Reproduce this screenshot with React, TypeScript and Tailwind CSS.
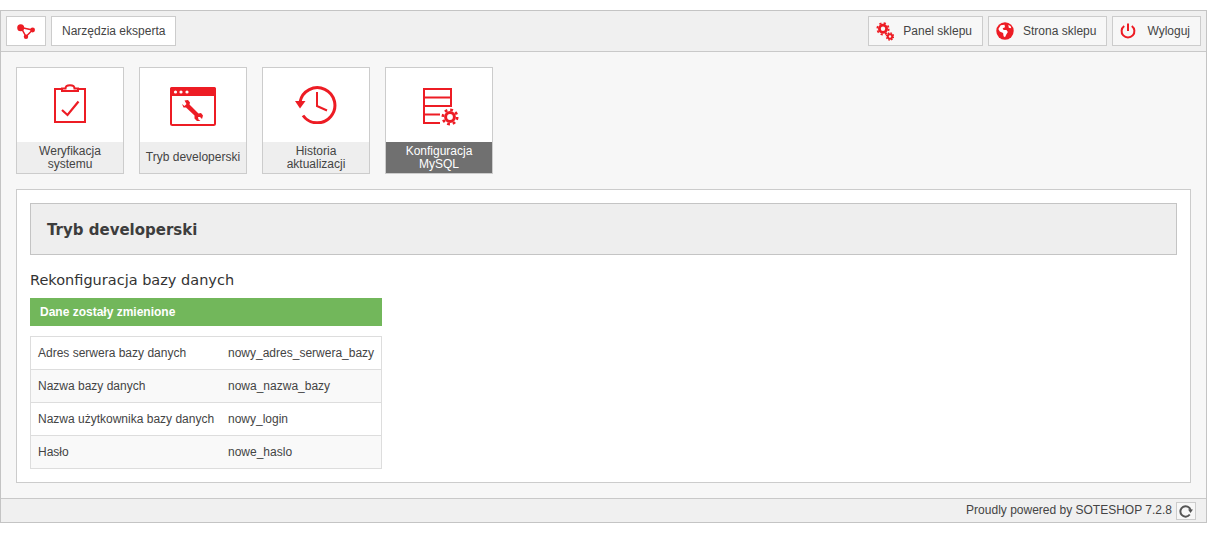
const font = { fontFamily: '"Liberation Sans", Arial, sans-serif' };

function GearsIcon() {
  return (
    <svg width="18" height="19" viewBox="0 0 18 19" fill="none" stroke="#ed1c24">
      <circle cx="7" cy="6.8" r="3.6" strokeWidth="2.8" />
      <circle cx="7" cy="6.8" r="5.7" strokeWidth="1.8" strokeDasharray="2.2 2.28" />
      <circle cx="14" cy="14.5" r="2.2" strokeWidth="1.9" />
      <circle cx="14" cy="14.5" r="3.6" strokeWidth="1.4" strokeDasharray="1.6 1.23" />
    </svg>
  );
}

function GlobeIcon() {
  return (
    <svg width="18" height="18" viewBox="0 0 19 19">
      <circle cx="9.5" cy="9.5" r="9.2" fill="#ed1c24" />
      <path d="M5 3.5 L9 3 L9.5 5.5 L7 6.5 L8 8.5 L11 8.5 L12.5 10.5 L11 13 L9.5 16 L8 15 L7.5 11.5 L4 10 L2.5 7.5 Z" fill="#fff" />
      <path d="M13 2.8 L15.5 4.5 L16 6.5 L13.5 6 Z" fill="#fff" />
    </svg>
  );
}

function PowerIcon() {
  return (
    <svg width="16" height="16" viewBox="0 0 16 16" fill="none" stroke="#ed1c24" strokeWidth="2">
      <path d="M8 0.5 V8" />
      <path d="M4.2 3 A6.4 6.4 0 1 0 11.8 3" />
    </svg>
  );
}

function NetworkIcon() {
  return (
    <svg width="18" height="15" viewBox="0 0 18 15" fill="none" stroke="#ed1c24">
      <path d="M4 3.5 L15.5 6 L9 12.5 Z" strokeWidth="1.5" />
      <circle cx="3.7" cy="3.7" r="3.5" fill="#ed1c24" stroke="none" />
      <circle cx="15.6" cy="6" r="2.4" fill="#ed1c24" stroke="none" />
      <circle cx="9" cy="12.7" r="2.2" fill="#ed1c24" stroke="none" />
    </svg>
  );
}

function RefreshIcon() {
  return (
    <svg width="14" height="14" viewBox="0 0 14 14" fill="none" stroke="#555555" strokeWidth="2">
      <path d="M11.6 6 A5.2 5.2 0 1 0 10.8 10.5" />
      <path d="M9 5.5 H14 L11.5 9 Z" fill="#555555" stroke="none" />
    </svg>
  );
}

function ClipboardIcon() {
  return (
    <svg width="32" height="39" viewBox="0 0 32 39" fill="none" stroke="#ed1c24" strokeWidth="2" className="mb-[3px]">
      <path d="M8 5 H1 V38 H31 V5 H24" />
      <path d="M8 7 V4.5 H11.5 C11.5 0 20.5 0 20.5 4.5 H24 V7 Z" fill="#fff" />
      <path d="M8 26 L13.5 31 L24.5 17.5" strokeWidth="2.2" />
    </svg>
  );
}

function WindowIcon() {
  return (
    <svg width="46" height="39" viewBox="0 0 46 39" fill="none" className="mt-[2px]">
      <rect x="1" y="1" width="44" height="37" rx="1.5" stroke="#ed1c24" strokeWidth="2" />
      <path d="M0 2 Q0 0 2 0 H44 Q46 0 46 2 V9 H0 Z" fill="#ed1c24" />
      <circle cx="5.5" cy="5" r="1.6" fill="#fff" />
      <circle cx="11" cy="5" r="1.6" fill="#fff" />
      <circle cx="17" cy="5" r="1.6" fill="#fff" />
      <path d="M14.5 13.5 L18 13 L20 15.5 L19.5 17.5 L28.5 26.5 L31 26 L33 28.5 L32 32 L30 30 L28 30 L28.5 32.5 L30.5 34 L27 34 L24.5 31.5 L24.5 28.5 L16 20.5 L13.5 20.5 L12 17 L14.5 19 L16.5 17 Z" fill="#ed1c24" />
    </svg>
  );
}

function HistoryIcon() {
  return (
    <svg width="43" height="38" viewBox="0 0 43 38" fill="none" stroke="#ed1c24">
      <path d="M5 16 A17.6 17.6 0 1 1 8 29.5" strokeWidth="3" />
      <path d="M0 15 H10.5 L5 22.5 Z" fill="#ed1c24" stroke="none" />
      <path d="M22 6 V20 L32 24.5" strokeWidth="2" />
    </svg>
  );
}

function DatabaseIcon() {
  return (
    <svg width="36" height="38" viewBox="0 0 36 38" fill="none" stroke="#ed1c24" strokeWidth="2" className="mt-[4px] ml-[4px]">
      <path d="M17 35 H1 V1 H28 V18 H1 M1 9.5 H28 M1 26.5 H17" />
      <circle cx="27" cy="29" r="4.4" strokeWidth="3" />
      <circle cx="27" cy="29" r="7.2" strokeWidth="2.6" strokeDasharray="2.8 2.85" />
    </svg>
  );
}

const tiles = [
  { label: 'Weryfikacja systemu', icon: <ClipboardIcon /> },
  { label: 'Tryb developerski', icon: <WindowIcon /> },
  { label: 'Historia aktualizacji', icon: <HistoryIcon /> },
  { label: 'Konfiguracja MySQL', icon: <DatabaseIcon />, active: true },
];

const rows = [
  ['Adres serwera bazy danych', 'nowy_adres_serwera_bazy'],
  ['Nazwa bazy danych', 'nowa_nazwa_bazy'],
  ['Nazwa użytkownika bazy danych', 'nowy_login'],
  ['Hasło', 'nowe_haslo'],
];

function TopButton({ icon, label }: { icon: React.ReactNode; label: string }) {
  return (
    <div className="flex h-[30px] items-center border border-[#cccccc] bg-[#f7f7f7] pr-[10px] pl-[7px] text-xs text-[#444444]">
      <span className="flex w-[27px] items-center">{icon}</span>
      {label}
    </div>
  );
}

export default function App() {
  return (
    <div style={font} className="h-[553px] bg-white pt-[10px] text-xs text-[#444444]">
      <div className="border border-[#c4c4c4] bg-[#f7f7f7]">
        <div className="flex h-[41px] items-center justify-between border-b border-[#c9c9c9] bg-[#f0f0f0] px-[5px]">
          <div className="flex gap-[5px]">
            <div className="flex h-[30px] w-[40px] items-center justify-center border border-[#cccccc] bg-white">
              <NetworkIcon />
            </div>
            <div className="flex h-[30px] items-center border border-[#cccccc] bg-white px-[10px]">Narzędzia eksperta</div>
          </div>
          <div className="flex gap-[5px]">
            <TopButton icon={<GearsIcon />} label="Panel sklepu" />
            <TopButton icon={<GlobeIcon />} label="Strona sklepu" />
            <TopButton icon={<PowerIcon />} label="Wyloguj" />
          </div>
        </div>

        <div className="p-[15px]">
          <div className="flex gap-[15px]">
            {tiles.map((t) => (
              <div key={t.label} className="flex h-[107px] w-[108px] flex-col border border-[#cccccc] bg-white">
                <div className="flex h-[74px] items-center justify-center">{t.icon}</div>
                <div
                  className={`flex flex-1 items-center justify-center px-[4px] text-center leading-[13px] ${
                    t.active ? 'bg-[#707070] text-white' : 'bg-[#eeeeee] text-[#444444]'
                  }`}
                >
                  {t.label}
                </div>
              </div>
            ))}
          </div>

          <div className="mt-[15px] h-[294px] border border-[#cccccc] bg-white px-[13px] pt-[13px]">
            <div className="flex h-[52px] items-center border border-[#c4c4c4] bg-[#eeeeee] px-[16px] pt-[3px]">
              <h1 style={{ fontFamily: '"DejaVu Sans", sans-serif' }} className="text-[15px] font-bold text-[#3d3d3d]">
                Tryb developerski
              </h1>
            </div>
            <h2 style={{ fontFamily: '"DejaVu Sans", sans-serif' }} className="mt-[15px] text-[14.5px] leading-[20px] text-[#333333]">
              Rekonfiguracja bazy danych
            </h2>
            <div className="mt-[8px] flex h-[28px] w-[352px] items-center bg-[#72b75b] px-[10px] font-bold text-white">
              Dane zostały zmienione
            </div>
            <div className="mt-[10px] w-[352px] border border-b-0 border-[#dddddd]">
              {rows.map(([name, value], i) => (
                <div
                  key={name}
                  className={`flex h-[33px] items-center border-b border-[#dddddd] pl-[7px] ${i % 2 ? 'bg-[#f9f9f9]' : 'bg-white'}`}
                >
                  <span className="w-[190px]">{name}</span>
                  <span>{value}</span>
                </div>
              ))}
            </div>
          </div>
        </div>

        <div className="flex h-[24px] items-center justify-end gap-[4px] border-t border-[#c9c9c9] bg-[#f0f0f0] pr-[10px]">
          <span className="pb-[1px]">Proudly powered by SOTESHOP 7.2.8</span>
          <span className="flex h-[18px] w-[20px] items-center justify-center border border-[#cccccc] bg-[#f7f7f7]">
            <RefreshIcon />
          </span>
        </div>
      </div>
    </div>
  );
}
